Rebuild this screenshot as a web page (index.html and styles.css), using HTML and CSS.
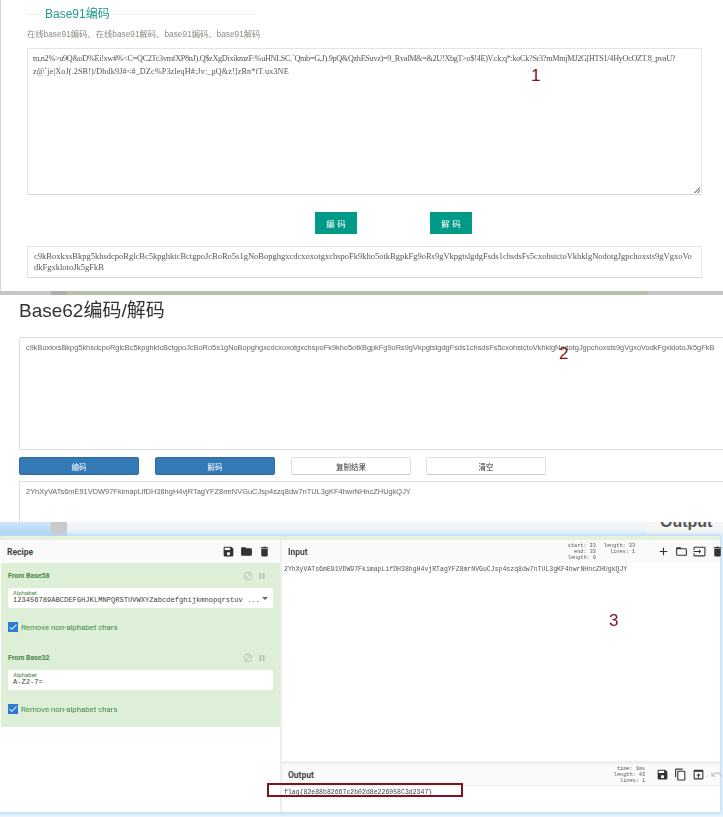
FILE: index.html
```html
<!DOCTYPE html>
<html lang="zh">
<head>
<meta charset="utf-8">
<title>Base91 / Base62 / CyberChef</title>
<link rel="stylesheet" href="styles.css">
</head>
<body>
<svg class="defs" width="0" height="0" aria-hidden="true">
  <symbol id="i-save" viewBox="0 0 24 24"><path d="M17 3H5a2 2 0 0 0-2 2v14a2 2 0 0 0 2 2h14a2 2 0 0 0 2-2V7zm-5 16a3 3 0 1 1 0-6 3 3 0 0 1 0 6zm3-10H5V5h10z"/></symbol>
  <symbol id="i-folder" viewBox="0 0 24 24"><path d="M10 4H4a2 2 0 0 0-2 2v12a2 2 0 0 0 2 2h16a2 2 0 0 0 2-2V8a2 2 0 0 0-2-2h-8z"/></symbol>
  <symbol id="i-trash" viewBox="0 0 24 24"><path d="M6 19a2 2 0 0 0 2 2h8a2 2 0 0 0 2-2V7H6zM19 4h-3.500l-1-1h-5l-1 1H5v2h14z"/></symbol>
  <symbol id="i-plus" viewBox="0 0 24 24"><path d="M19 13h-6v6h-2v-6H5v-2h6V5h2v6h6z"/></symbol>
  <symbol id="i-folder-o" viewBox="0 0 24 24"><path d="M20 6h-8l-2-2H4a2 2 0 0 0-2 2v12a2 2 0 0 0 2 2h16a2 2 0 0 0 2-2V8a2 2 0 0 0-2-2zm0 12H4V8h16z"/></symbol>
  <symbol id="i-input" viewBox="0 0 24 24"><path d="M21 3H3a2 2 0 0 0-2 2v4h2V5h18v14H3v-4H1v4a2 2 0 0 0 2 2h18a2 2 0 0 0 2-2V5a2 2 0 0 0-2-2zM11 16l4-4-4-4v3H1v2h10z"/></symbol>
  <symbol id="i-copy" viewBox="0 0 24 24"><path d="M16 1H4a2 2 0 0 0-2 2v14h2V3h12zm3 4H8a2 2 0 0 0-2 2v14a2 2 0 0 0 2 2h11a2 2 0 0 0 2-2V7a2 2 0 0 0-2-2zm0 16H8V7h11z"/></symbol>
  <symbol id="i-open" viewBox="0 0 24 24"><path d="M19 3H5a2 2 0 0 0-2 2v14a2 2 0 0 0 2 2h14a2 2 0 0 0 2-2V5a2 2 0 0 0-2-2zm0 16H5V7h14zm-7-9-4 4h3v4h2v-4h3z"/></symbol>
  <symbol id="i-undo" viewBox="0 0 24 24"><path d="M12.500 8c-2.600 0-5 1-6.900 2.600L2 7v9h9l-3.600-3.600a8 8 0 0 1 12.700 3.600l2.400-.8A10.500 10.500 0 0 0 12.500 8z"/></symbol>
  <symbol id="i-block" viewBox="0 0 24 24"><path d="M12 2a10 10 0 1 0 0 20 10 10 0 0 0 0-20zM4 12a8 8 0 0 1 12.900-6.300L5.700 16.900A8 8 0 0 1 4 12zm8 8a8 8 0 0 1-4.900-1.700L18.300 7.100A8 8 0 0 1 12 20z"/></symbol>
  <symbol id="i-pause" viewBox="0 0 24 24"><path d="M6 19h4V5H6zm8-14v14h4V5z"/></symbol>
  <symbol id="i-check" viewBox="0 0 24 24"><path d="M9 16.200 4.800 12l-1.400 1.400L9 19 21 7l-1.400-1.400z"/></symbol>
</svg>

<main class="stack">
  <section class="b91">
    <div class="b91-title"><span class="b91-rule b91-rule-s"></span><h1>Base91编码</h1><span class="b91-rule"></span></div>
    <p class="b91-sub">在线base91编码、在线base91解码、base91编码、base91解码</p>
    <div class="b91-input"><span class="l1">m,n2%&gt;u9Q&amp;oD%Ei!xw#%&lt;C=QC2Tc3vmfXP8nJ).Q$zXgDixikmzF:%uHNLSC.`Qmb=G,J).9pQ&amp;QzhESuvz)=9_RvalM&amp;=&amp;2U!XbgT&gt;o$!4E)V.ck;q*:koCk?Sr3?mMmjMJ2G[HTS1/4HyOcOZT.8_pvaU?</span><br><span class="l2">z@`je|XoJ(.2SB!)/Dbdk9J#&lt;#_DZc%P3zleqH#;Jv:_pQ&amp;z!]zRn*fT.ux3NE</span><span class="grip"></span></div>
    <div class="b91-actions"><button class="teal">编 码</button><button class="teal">解 码</button></div>
    <div class="b91-output">c9kBoxkxsBkpg5khsdcpoRglcBc5kpghktcBctgpoJcBoRo5s1gNoBopghgxcdcxoxotgxchspoFk9kho5otkBgpkFg9oRs9gVkpgtslgdgFsds1chsdsFs5cxohstctoVkhklgNodotgJgpchoxsts9gVgxoVo<br>dkFgxklotoJk5gFkB</div>
  </section>
  <div class="band-green"></div>

  <section class="b62">
    <h2>Base62编码/解码</h2>
    <div class="b62-input">c9kBoxkxsBkpg5khsdcpoRglcBc5kpghktcBctgpoJcBoRo5s1gNoBopghgxcdcxoxotgxchspoFk9kho5otkBgpkFg9oRs9gVkpgtslgdgFsds1chsdsFs5cxohstctoVkhklgNodotgJgpchoxsts9gVgxoVodkFgxklotoJk5gFkB</div>
    <div class="b62-actions">
      <button class="blue">编码</button><button class="blue">解码</button><button class="plain">复制结果</button><button class="plain">清空</button>
    </div>
    <div class="b62-output">2YhXyVATs6mE91VDW97FkimapLifDH38hgH4vjRTagYFZ8mrNVGuCJsp4szq8dw7nTUL3gKF4hwrNHncZHUgkQJY</div>
  </section>

  <div class="band-blue">
    <span class="bb-a"></span><span class="bb-b"></span><span class="bb-c"></span><span class="bb-d">Output</span>
  </div>

  <section class="chef">
    <div class="chef-top"></div>
    <div class="chef-body">
      <aside class="recipe">
        <header class="chef-head">
          <b>Recipe</b>
          <span class="tools dark"><svg><use href="#i-save"/></svg><svg><use href="#i-folder"/></svg><svg><use href="#i-trash"/></svg></span>
        </header>
        <div class="ops">
          <div class="op">
            <div class="op-head"><b>From Base58</b><span class="op-tools"><svg><use href="#i-block"/></svg><svg><use href="#i-pause"/></svg></span></div>
            <div class="field"><label>Alphabet</label><span>123456789ABCDEFGHJKLMNPQRSTUVWXYZabcdefghijkmnopqrstuv ...</span><i class="caret"></i></div>
            <div class="check"><span class="box"><svg><use href="#i-check"/></svg></span>Remove non-alphabet chars</div>
          </div>
          <div class="op">
            <div class="op-head"><b>From Base32</b><span class="op-tools"><svg><use href="#i-block"/></svg><svg><use href="#i-pause"/></svg></span></div>
            <div class="field"><label>Alphabet</label><span>A-Z2-7=</span></div>
            <div class="check"><span class="box"><svg><use href="#i-check"/></svg></span>Remove non-alphabet chars</div>
          </div>
        </div>
      </aside>
      <div class="io">
        <header class="chef-head io-head">
          <b>Input</b>
          <span class="stats"><span>start: 33<br>end: 33<br>length: 0</span><span>length: 33<br>lines: 1</span></span>
          <span class="tools line"><svg><use href="#i-plus"/></svg><svg><use href="#i-folder-o"/></svg><svg><use href="#i-input"/></svg><svg><use href="#i-trash"/></svg></span>
        </header>
        <div class="io-input">2YhXyVATs6mE91VDW97FkimapLifDH38hgH4vjRTagYFZ8mrNVGuCJsp4szq8dw7nTUL3gKF4hwrNHncZHUgkQJY</div>
        <div class="io-split"></div>
        <header class="chef-head out-head">
          <b>Output</b>
          <span class="stats"><span>time: 1ms<br>length: 43<br>lines: 1</span></span>
          <span class="tools line"><svg><use href="#i-save"/></svg><svg><use href="#i-copy"/></svg><svg><use href="#i-open"/></svg><svg class="faint"><use href="#i-undo"/></svg></span>
        </header>
        <div class="io-output">flag{82e88b82667c2b02d8e226058C3d2347}</div>
      </div>
    </div>
  </section>
  <div class="band-foot"></div>

  <span class="mark mark-1">1</span>
  <span class="mark mark-2">2</span>
  <span class="mark mark-3">3</span>
  <span class="redbox"></span>
</main>
</body>
</html>
```

FILE: styles.css
```css
* { box-sizing: border-box; }
html, body { margin: 0; padding: 0; }
body {
  width: 723px;
  height: 817px;
  overflow: hidden;
  background: #fff;
  font-family: "Liberation Sans", "Noto Sans CJK SC", sans-serif;
}
.defs { position: absolute; }
.stack { position: relative; display: flex; flex-direction: column; width: 723px; height: 817px; overflow: hidden; }
.stack > section { filter: blur(.35px); }
button { padding: 0; border: 0; font-family: inherit; }
svg { display: block; fill: currentColor; }

/* Panel 1: Base91 */
.b91 { height: 291px; padding: 0 21px 0 26px; border-left: 1px solid #cfd6dc; background: #fff; flex: none; }
.b91-title { display: flex; align-items: center; height: 28px; }
.b91-rule { flex: none; width: 140px; height: 1px; background: #eee; }
.b91-rule-s { width: 14px; }
.b91-title h1 { margin: 0 4px; font-size: 12px; line-height: 28px; font-weight: 400; color: #1f9c8a; }
.b91-sub { margin: 0; font-size: 8.300px; line-height: 12px; height: 20px; color: #8b8b85; }
.b91-input {
  position: relative;
  height: 147px;
  padding: 3px 5px;
  border: 1px solid #e4e4e4;
  border-bottom-color: #d6d6d6;
  font-family: "Liberation Serif", serif;
  font-size: 8.200px;
  line-height: 13px;
  color: #555;
  white-space: nowrap;
}
.l1 { letter-spacing: -.3px; }
.l2 { letter-spacing: .12px; }
.grip {
  position: absolute; right: 1px; bottom: 1px; width: 6px; height: 6px;
  background: linear-gradient(135deg, transparent 50%, #999 50%, #999 60%, transparent 60%, transparent 75%, #999 75%, #999 85%, transparent 85%);
}
.b91-actions { display: flex; gap: 73px; padding: 17px 0 0 288px; height: 51px; }
.teal { width: 42px; height: 22px; background: #009a86; color: #fff; font-size: 8.500px; }
.b91-output {
  height: 32px;
  padding: 4px 6px;
  border: 1px solid #e6e6e6;
  border-bottom-color: #d6d6d6;
  font-family: "Liberation Serif", serif;
  font-size: 8.500px;
  line-height: 11px;
  color: #555;
  white-space: nowrap;
  overflow: hidden;
}
.band-green { flex: none; height: 4px; background: linear-gradient(90deg, #c3c9c2 0, #c3c9c2 51px, #a9aea6 51px, #a9aea6 67px, #b7bfad 67px, #b7bfad 648px, #c4c4c4 648px); }

/* Panel 2: Base62 */
.b62 { flex: none; height: 227px; padding-left: 19px; background: #fff; overflow: hidden; }
.b62 h2 { margin: 0; height: 42px; font-size: 19px; line-height: 32px; font-weight: 400; color: #333; }
.b62-input {
  width: 710px;
  height: 113px;
  padding: 3px 6px;
  border: 1px solid #ddd;
  border-radius: 2px;
  font-size: 7.420px;
  line-height: 13px;
  color: #666;
  white-space: nowrap;
}
.b62-actions { display: flex; gap: 16px; padding: 7px 0 6px; }
.blue, .plain { width: 120px; height: 18px; border-radius: 2px; font-size: 7.500px; }
.blue { background: #337ab7; color: #fff; border: 1px solid #2e6da4; }
.plain { background: #fff; color: #333; border: 1px solid #e2e2e2; border-bottom-color: #ccc; }
.plain + .plain { margin-left: -1px; }
.b62-output {
  width: 710px;
  height: 60px;
  padding: 3px 6px;
  border: 1px solid #ddd;
  font-size: 7.450px;
  line-height: 13px;
  color: #666;
}

/* Strip between panels */
.band-blue { position: relative; flex: none; display: flex; height: 14px; box-shadow: inset 0 2px 2px rgba(0,0,0,.12); overflow: hidden; }
.bb-a { width: 51px; background: linear-gradient(#cfe6f8, #a9d2f4); }
.bb-b { width: 16px; background: #c9c9c9; }
.bb-c { width: 578px; background: linear-gradient(#f7f7f7, #e3f0fb); }
.bb-d { flex: 1; padding-left: 15px; background: #f5f5f5; font-size: 16px; font-weight: 700; line-height: 1; color: #555; margin-top: -8px; }

/* Panel 3: CyberChef */
.chef { flex: none; height: 276px; display: flex; flex-direction: column; margin-right: 3px; background: #fff; box-shadow: 0 0 4px 2px #b7dbf8; }
.chef-top { flex: none; height: 4px; background: #e4f1dc; }
.chef-body { flex: 1; display: flex; min-height: 0; }
.recipe { flex: none; width: 280px; padding-left: 1px; }
.chef-head { display: flex; align-items: center; height: 23px; background: #fafafa; padding: 0 6px; }
.chef-head b { font-size: 8.500px; font-weight: 700; color: #444; font-family: "Roboto", sans-serif; }
.tools { display: flex; margin-left: auto; color: #333; }
.tools svg { flex: none; width: 13px; height: 13px; }
.tools.dark { gap: 5px; padding-right: 3px; }
.tools.line { gap: 5px; }
.tools .faint { color: #ccc; }
.ops { background: #deefd8; height: 164px; }
.op { height: 82px; padding: 6px 7px 0; }
.op-head { display: flex; align-items: center; height: 13px; }
.op-head b { font-size: 7px; color: #468847; font-family: "Roboto", sans-serif; }
.op-tools { display: flex; gap: 4px; margin-left: auto; padding-right: 6px; color: #b3bfb0; }
.op-tools svg { width: 10px; height: 10px; }
.field { position: relative; height: 20px; margin-top: 6px; padding: 1px 5px; background: #fff; border-radius: 2px; }
.field label { display: block; font-size: 6px; line-height: 7px; color: #468847; font-family: "Roboto", sans-serif; }
.field span { display: block; font-family: "Liberation Mono", monospace; font-size: 7.100px; line-height: 9px; color: #444; white-space: nowrap; overflow: hidden; }
.caret { position: absolute; right: 5px; top: 9px; border: 3px solid transparent; border-top-color: #666; }
.check { display: flex; align-items: center; gap: 3px; height: 10px; margin-top: 14px; font-size: 7.800px; color: #468847; font-family: "Roboto", sans-serif; }
.box { display: block; flex: none; width: 10px; height: 10px; background: #2e7bd6; color: #fff; }
.box svg { width: 10px; height: 10px; }
.io { flex: 1; display: flex; flex-direction: column; border-left: 2px solid #eee; min-width: 0; }
.io-head { padding: 0 0 0 6px; }
.stats { display: flex; gap: 8px; margin-left: auto; font-family: "Liberation Mono", monospace; font-size: 5.200px; line-height: 6px; color: #555; text-align: right; }
.io-head .tools { margin: 0 -4px 0 22px; }
.io-input { flex: 1; padding: 2px 2px; font-family: "Liberation Mono", monospace; font-size: 6.500px; line-height: 9px; color: #555; white-space: nowrap; overflow: hidden; }
.io-split { flex: none; height: 3px; background: #eee; }
.out-head { height: 22px; border-bottom: 1px solid #eee; padding: 0 0 0 6px; }
.out-head .tools { margin: 0 -3px 0 11px; }
.io-output { flex: none; height: 26px; padding: 2px 2px; font-family: "Liberation Mono", monospace; font-size: 6.500px; line-height: 9px; color: #444; }
.band-foot { flex: 1; background: #eff6fd; }

/* Annotations laid over the screenshots */
.mark { position: absolute; font-size: 17px; line-height: 1; color: #7e1420; }
.mark-1 { left: 531px; top: 67px; }
.mark-2 { left: 559px; top: 345px; }
.mark-3 { left: 609px; top: 612px; }
.redbox { position: absolute; left: 267px; top: 783px; width: 196px; height: 14px; border: 2px solid #7e1420; }
```
